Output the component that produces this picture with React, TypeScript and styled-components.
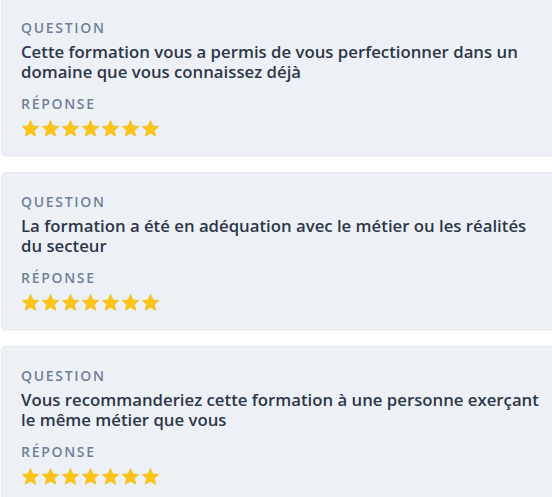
import { createGlobalStyle } from "styled-components";
import styled from "styled-components";

interface Answer {
  question: string;
  rating: number;
}

const answers: Answer[] = [
  {
    question:
      "Cette formation vous a permis de vous perfectionner dans un domaine que vous connaissez déjà",
    rating: 7,
  },
  {
    question:
      "La formation a été en adéquation avec le métier ou les réalités du secteur",
    rating: 7,
  },
  {
    question:
      "Vous recommanderiez cette formation à une personne exerçant le même métier que vous",
    rating: 7,
  },
];

const GlobalStyle = createGlobalStyle`
  html, body {
    margin: 0;
    padding: 0;
    background: #ffffff;
    overflow: hidden;
  }
  body {
    font-family: "Open Sans", "Noto Sans", sans-serif;
  }
`;

const Star = () => (
  <StarIcon viewBox="0 0 24 24">
    <path
      d="M12 1.8l3.1 6.9 7.4.7-5.6 5 1.7 7.4L12 17.9l-6.6 3.9 1.7-7.4-5.6-5 7.4-.7z"
      fill="#fcc419"
      stroke="#f2b705"
      strokeWidth="0.8"
      strokeLinejoin="round"
    />
  </StarIcon>
);

export default function App() {
  return (
    <>
      <GlobalStyle />
      <List>
        {answers.map((a, i) => (
          <Card key={i}>
            <Label>Question</Label>
            <QuestionText>{a.question}</QuestionText>
            <Label $spaced>Réponse</Label>
            <Stars>
              {Array.from({ length: a.rating }).map((_, j) => (
                <Star key={j} />
              ))}
            </Stars>
          </Card>
        ))}
      </List>
    </>
  );
}

const List = styled.div`
  display: flex;
  flex-direction: column;
  gap: 16px;
  margin-top: -2px;
  padding-left: 1px;
  width: 620px;
`;

const Card = styled.div`
  background: #edf1f6;
  border: 1px solid #e4e9ef;
  border-radius: 5px;
  box-shadow: 0 1px 2px rgba(30, 45, 70, 0.05);
  padding: 19px 19px 17px;
`;

const Label = styled.div<{ $spaced?: boolean }>`
  font-size: 14px;
  line-height: 20px;
  font-weight: 600;
  letter-spacing: 1.7px;
  text-transform: uppercase;
  color: #718096;
  margin-top: ${(p) => (p.$spaced ? "12px" : "0")};
`;

const QuestionText = styled.div`
  margin-top: 4px;
  width: 523px;
  font-size: 16.75px;
  line-height: 20px;
  font-weight: 600;
  color: #2d3748;
`;

const Stars = styled.div`
  display: flex;
  gap: 1px;
  margin-top: 4px;
  height: 20px;
  align-items: center;
`;

const StarIcon = styled.svg`
  width: 19px;
  height: 19px;
`;
